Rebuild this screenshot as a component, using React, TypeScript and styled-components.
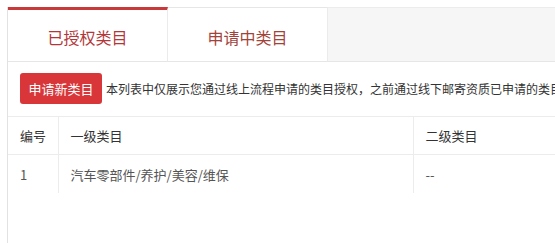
import React from 'react'
import styled, { createGlobalStyle } from 'styled-components'

const GlobalStyle = createGlobalStyle`
  html, body {
    margin: 0;
    padding: 0;
    background: #fff;
    overflow: hidden;
  }
  body {
    font-family: 'Noto Sans CJK SC', 'Noto Sans', sans-serif;
    color: #333;
  }
`

const Panel = styled.div`
  margin: 7px 0 0 7px;
  width: 720px;
  min-height: 240px;
  border-left: 1px solid #e2e2e2;
  background: #fff;
`

const TabBar = styled.div`
  display: flex;
  height: 55px;
  border-bottom: 1px solid #e6e6e6;
  box-sizing: border-box;
`

const Tab = styled.div<{ $active?: boolean }>`
  width: 160px;
  box-sizing: border-box;
  display: flex;
  align-items: center;
  justify-content: center;
  padding-top: ${(p) => (p.$active ? '3px' : '5px')};
  border-top: ${(p) => (p.$active ? '3px solid #c9393a' : '1px solid #e6e6e6')};
  border-right: 1px solid #ebebeb;
  background: #fff;
  font-size: 16px;
  color: ${(p) => (p.$active ? '#b3373a' : '#a2433a')};
  cursor: pointer;
`

const TabFiller = styled.div`
  flex: 1;
  background: #f6f6f6;
  border-top: 1px solid #ececec;
`

const Toolbar = styled.div`
  display: flex;
  align-items: center;
  gap: 4px;
  padding: 11px 12px 12px;
  white-space: nowrap;
`

const PrimaryButton = styled.button`
  height: 31px;
  width: 82px;
  padding: 0;
  border: none;
  border-radius: 3px;
  background: #d9363a;
  color: #fff;
  font-family: inherit;
  font-size: 13px;
  cursor: pointer;
`

const Notice = styled.span`
  font-size: 12px;
  color: #333;
`

const Table = styled.table`
  border-collapse: collapse;
  width: 100%;
  table-layout: fixed;
  font-size: 13px;
`

const Col = styled.col<{ $width?: number }>`
  width: ${(p) => (p.$width ? `${p.$width}px` : 'auto')};
`

const HeadCell = styled.th`
  height: 37px;
  padding: 0 0 0 12px;
  text-align: left;
  font-weight: normal;
  color: #333;
  border-top: 1px solid #ececec;
  border-bottom: 1px solid #ececec;
  & + & {
    border-left: 1px solid #ececec;
  }
`

const Cell = styled.td`
  height: 38px;
  padding: 0 0 0 12px;
  color: #555;
  & + & {
    border-left: 1px solid #ececec;
  }
`

const rows = [{ id: 1, first: '汽车零部件/养护/美容/维保', second: '--' }]

const App: React.FC = () => {
  return (
    <>
      <GlobalStyle />
      <Panel>
        <TabBar>
          <Tab $active>已授权类目</Tab>
          <Tab>申请中类目</Tab>
          <TabFiller />
        </TabBar>
        <Toolbar>
          <PrimaryButton>申请新类目</PrimaryButton>
          <Notice>本列表中仅展示您通过线上流程申请的类目授权，之前通过线下邮寄资质已申请的类目</Notice>
        </Toolbar>
        <Table>
          <colgroup>
            <Col $width={50} />
            <Col $width={355} />
            <Col />
          </colgroup>
          <thead>
            <tr>
              <HeadCell>编号</HeadCell>
              <HeadCell>一级类目</HeadCell>
              <HeadCell>二级类目</HeadCell>
            </tr>
          </thead>
          <tbody>
            {rows.map((row) => (
              <tr key={row.id}>
                <Cell>{row.id}</Cell>
                <Cell>{row.first}</Cell>
                <Cell>{row.second}</Cell>
              </tr>
            ))}
          </tbody>
        </Table>
      </Panel>
    </>
  )
}

export default App
